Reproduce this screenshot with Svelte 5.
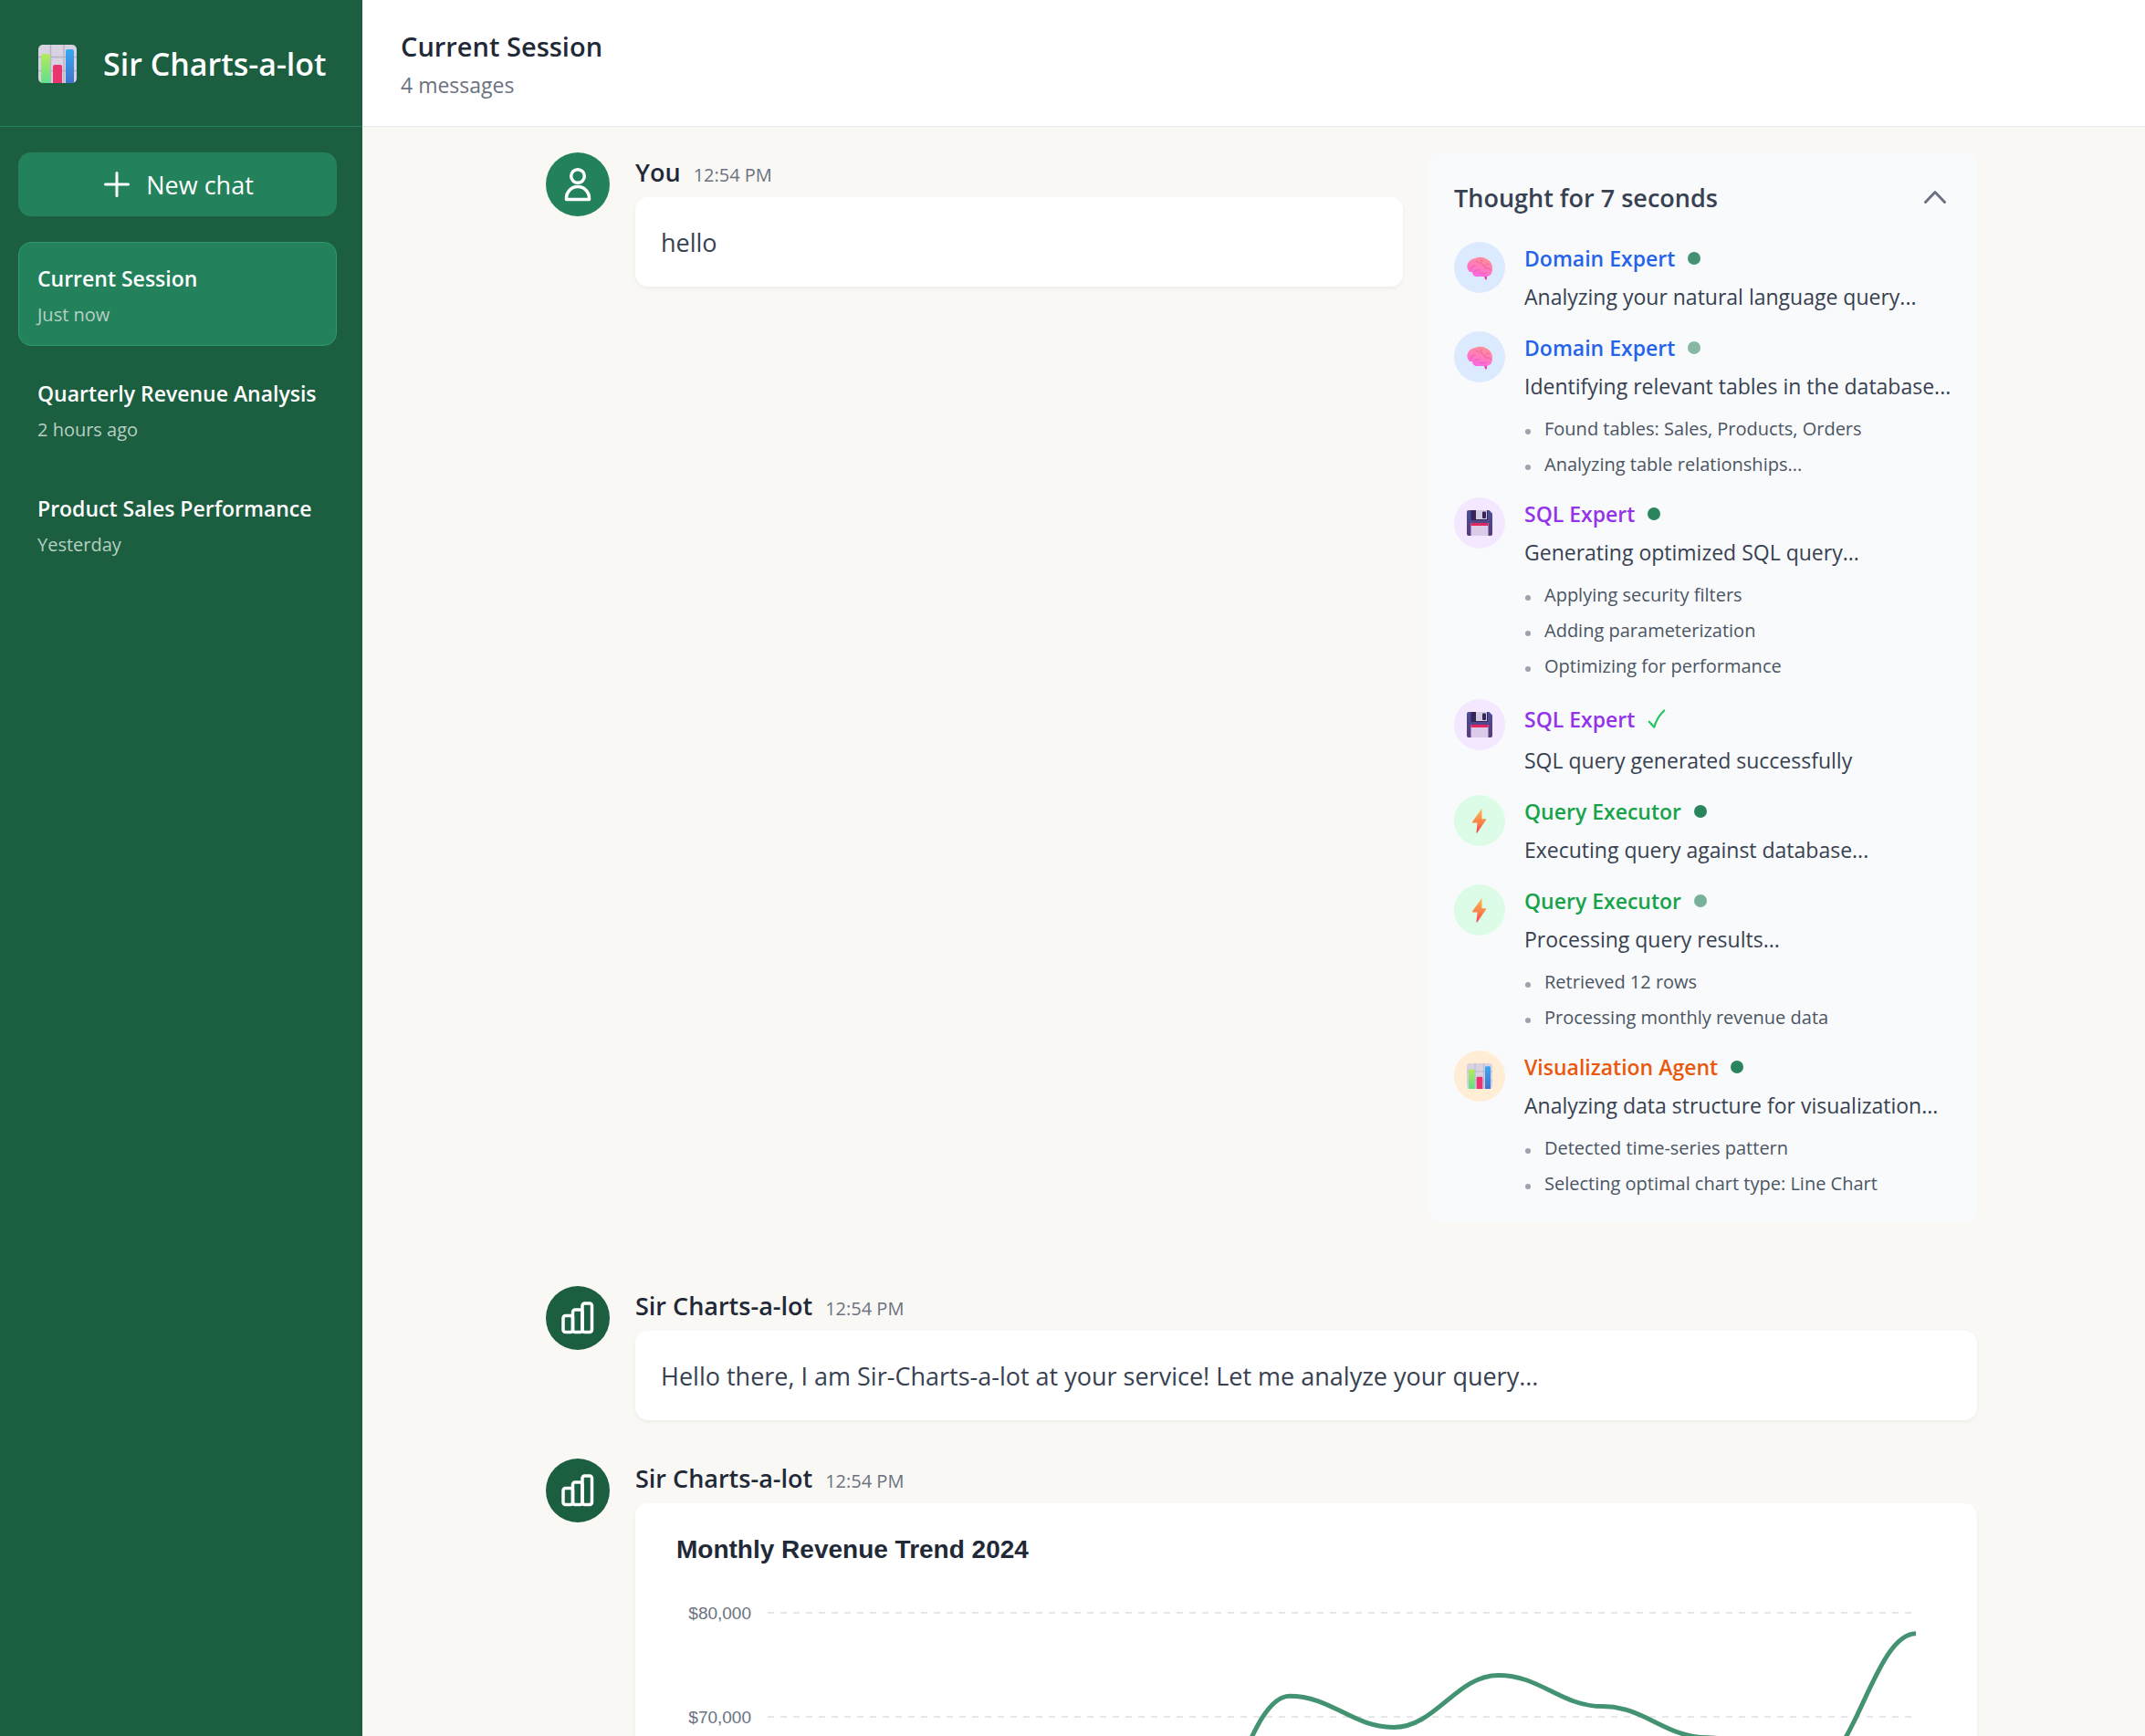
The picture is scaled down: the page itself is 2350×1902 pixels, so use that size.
<script>
  const sessions = [
    { title: 'Current Session', when: 'Just now', active: true },
    { title: 'Quarterly Revenue Analysis', when: '2 hours ago', active: false },
    { title: 'Product Sales Performance', when: 'Yesterday', active: false }
  ];

  const thoughts = [
    { agent: 'Domain Expert', kind: 'domain', status: 'mid', text: 'Analyzing your natural language query...', details: [] },
    { agent: 'Domain Expert', kind: 'domain', status: 'dim', text: 'Identifying relevant tables in the database...', details: ['Found tables: Sales, Products, Orders', 'Analyzing table relationships...'] },
    { agent: 'SQL Expert', kind: 'sql', status: 'full', text: 'Generating optimized SQL query...', details: ['Applying security filters', 'Adding parameterization', 'Optimizing for performance'] },
    { agent: 'SQL Expert', kind: 'sql', status: 'done', text: 'SQL query generated successfully', details: [] },
    { agent: 'Query Executor', kind: 'query', status: 'full', text: 'Executing query against database...', details: [] },
    { agent: 'Query Executor', kind: 'query', status: 'soft', text: 'Processing query results...', details: ['Retrieved 12 rows', 'Processing monthly revenue data'] },
    { agent: 'Visualization Agent', kind: 'viz', status: 'full', text: 'Analyzing data structure for visualization...', details: ['Detected time-series pattern', 'Selecting optimal chart type: Line Chart'] }
  ];

  // Chart geometry, in viewBox units
  const left = 117;
  const right = 1375;
  const top = 40;
  const perTen = 114;
  const revenue = [45, 52, 48, 61, 58, 72, 69, 74, 71, 68, 65, 78];
  const ticks = [80, 70];
  const yOf = (v) => top + ((80 - v) / 10) * perTen;
  const step = (right - left) / (revenue.length - 1);
  const line = revenue
    .map((v, i) => {
      const x = left + i * step;
      if (i === 0) return `M${x} ${yOf(v)}`;
      const h = step * 0.4;
      return `C${x - step + h} ${yOf(revenue[i - 1])} ${x - h} ${yOf(v)} ${x} ${yOf(v)}`;
    })
    .join(' ');

  let open = $state(true);
</script>

{#snippet chartEmoji()}
  <svg class="emoji" viewBox="0 0 42 42" aria-hidden="true">
    <defs>
      <linearGradient id="barGreen" x1="0" y1="0" x2="0" y2="1"><stop offset="0" stop-color="#b4ea5c" /><stop offset="1" stop-color="#5fe08c" /></linearGradient>
      <linearGradient id="barBlue" x1="0" y1="0" x2="0" y2="1"><stop offset="0" stop-color="#36a9f5" /><stop offset="1" stop-color="#4273cd" /></linearGradient>
    </defs>
    <rect width="42" height="42" rx="5" fill="#d9d2e3" />
    <path d="M13.5 0V42M28 0V42M0 13.5H42M0 28.500H42" stroke="#b9b1c6" stroke-width="1.4" />
    <path d="M3 42V12q0-2 2-2h6q2 0 2 2V42z" fill="url(#barGreen)" />
    <path d="M16 42V24q0-2 2-2h6q2 0 2 2V42z" fill="#e8346f" />
    <path d="M30 42V7q0-2 2-2h5q2 0 2 2V42z" fill="url(#barBlue)" />
  </svg>
{/snippet}

{#snippet brainEmoji()}
  <svg class="emoji" viewBox="0 0 28 28" aria-hidden="true">
    <defs>
      <linearGradient id="brain" x1="0.7" y1="0" x2="0.3" y2="1"><stop offset="0" stop-color="#ff8f93" /><stop offset="0.5" stop-color="#ff7cb9" /><stop offset="1" stop-color="#fb62ea" /></linearGradient>
    </defs>
    <path d="M18.500 22l1.500 5q1.500 1 2-.5L22 22z" fill="#e93fae" />
    <path d="M3 19Q-1 15 1 10 3 5 9 4q7-3 13 1 6 3 6 10 0 7-4 8-2 2-6 1H10Q6 23 6 19z" fill="url(#brain)" />
    <path d="M5 16q0-4 4-4M8 19q2-3 6-2M16 6q-2 3 1 5t4 4M24 10q-3 0-4 2M21 15q4-1 5 2M10 7q3 0 4 3M14 20q5 2 8-1" fill="none" stroke="#e4559f" stroke-width="0.8" stroke-linecap="round" />
  </svg>
{/snippet}

{#snippet floppyEmoji()}
  <svg class="emoji" viewBox="0 0 28 28" aria-hidden="true">
    <defs>
      <linearGradient id="disk" x1="0" y1="0" x2="0" y2="1"><stop offset="0" stop-color="#47519b" /><stop offset="1" stop-color="#5b3a78" /></linearGradient>
    </defs>
    <path d="M2 0H24.500L28 3.500V26q0 2-2 2H2q-2 0-2-2V2Q0 0 2 0z" fill="url(#disk)" />
    <path d="M4.500 0H23V9.500q0 1.500-1.500 1.500H6Q4.500 11 4.500 9.500z" fill="#35255a" />
    <path d="M10 0H22V9.500q0 .5-1 .5H10z" fill="#d3cce0" />
    <rect x="17" y="1.500" width="4" height="7.500" rx="1" fill="#35255a" />
    <path d="M4.500 14H23.500V28H4.500z" fill="#dacbe9" />
    <path d="M4.500 14H23.500V17H4.500z" fill="#e3265f" />
  </svg>
{/snippet}

{#snippet boltEmoji()}
  <svg class="emoji" viewBox="0 0 28 28" aria-hidden="true">
    <defs>
      <linearGradient id="bolt" x1="0" y1="0" x2="0" y2="1"><stop offset="0" stop-color="#fdb94c" /><stop offset="0.600" stop-color="#fb7f4a" /><stop offset="1" stop-color="#ea3f5c" /></linearGradient>
    </defs>
    <path d="M16 1.500L6 15.500q-.6 1 .5 1H11.500L10.500 27q0 1.500 1 .3L21 13.500q.6-1.200-.6-1.200H16.500V2q0-1-.5-.5z" fill="url(#bolt)" />
  </svg>
{/snippet}

{#snippet barsAvatar()}
  <div class="avatar bot">
    <svg viewBox="0 0 42 42" aria-hidden="true">
      <rect x="5" y="18.500" width="10.500" height="18" rx="2.500" />
      <rect x="15.500" y="12" width="10.500" height="24.500" rx="2.500" />
      <rect x="26" y="5" width="10.500" height="31.500" rx="2.500" />
    </svg>
  </div>
{/snippet}

<div class="app">
  <aside class="sidebar">
    <div class="brand">
      <span class="logo">{@render chartEmoji()}</span>
      <h1>Sir Charts-a-lot</h1>
    </div>
    <div class="side-body">
      <button class="new-chat" type="button">
        <svg viewBox="0 0 28 28" aria-hidden="true"><path d="M14 1.500V26.500M1.500 14H26.500" /></svg>
        New chat
      </button>
      <nav class="sessions">
        {#each sessions as s}
          <button type="button" class="session" class:active={s.active}>
            <span class="session-title">{s.title}</span>
            <span class="session-when">{s.when}</span>
          </button>
        {/each}
      </nav>
    </div>
  </aside>

  <div class="page">
    <header class="topbar">
      <h2>Current Session</h2>
      <p>4 messages</p>
    </header>

    <main class="scroller">
      <div class="thread">
        <article class="message first">
          <div class="avatar user">
            <svg viewBox="0 0 42 42" aria-hidden="true">
              <circle cx="21" cy="12" r="7.300" />
              <path d="M8.500 37.500V36a12.500 12.500 0 0 1 25 0v1.500z" />
            </svg>
          </div>
          <div class="content">
            <div class="meta"><strong>You</strong><time>12:54 PM</time></div>
            <div class="bubble">hello</div>
          </div>
          <section class="thoughts">
            <button class="toggle" type="button" aria-expanded={open} onclick={() => (open = !open)}>
              Thought for 7 seconds
              <svg viewBox="0 0 24 24" aria-hidden="true"><path d="M1.500 17.500L12 6.500l10.500 11" /></svg>
            </button>
            {#if open}
              <ul class="steps">
                {#each thoughts as t}
                  <li class="step {t.kind}">
                    <span class="badge">
                      {#if t.kind === 'domain'}{@render brainEmoji()}
                      {:else if t.kind === 'sql'}{@render floppyEmoji()}
                      {:else if t.kind === 'query'}{@render boltEmoji()}
                      {:else}{@render chartEmoji()}{/if}
                    </span>
                    <div class="step-body">
                      <div class="agent" class:tall={t.status === 'done'}>
                        <span>{t.agent}</span>
                        {#if t.status === 'done'}
                          <svg class="check" viewBox="0 0 22 24" aria-label="done"><path d="M2 15l6 6.500Q11 10 20 1.500" /></svg>
                        {:else}
                          <i class="dot {t.status}"></i>
                        {/if}
                      </div>
                      <p>{t.text}</p>
                      {#if t.details.length}
                        <ul class="details">
                          {#each t.details as d}<li>{d}</li>{/each}
                        </ul>
                      {/if}
                    </div>
                  </li>
                {/each}
              </ul>
            {/if}
          </section>
        </article>

        <article class="message">
          {@render barsAvatar()}
          <div class="content">
            <div class="meta"><strong>Sir Charts-a-lot</strong><time>12:54 PM</time></div>
            <div class="bubble">Hello there, I am Sir-Charts-a-lot at your service! Let me analyze your query...</div>
          </div>
        </article>

        <article class="message">
          {@render barsAvatar()}
          <div class="content">
            <div class="meta"><strong>Sir Charts-a-lot</strong><time>12:54 PM</time></div>
            <div class="bubble chart">
              <h3>Monthly Revenue Trend 2024</h3>
              <svg class="plot" viewBox="0 0 1414 520" role="img" aria-label="Monthly revenue line chart">
                {#each ticks as t}
                  <text x="99" y={yOf(t) + 7} text-anchor="end">${t},000</text>
                  <path class="grid" d="M{left} {yOf(t)}H{right - 5}" />
                {/each}
                <path class="line" d={line} />
              </svg>
            </div>
          </div>
        </article>
      </div>
    </main>
  </div>
</div>

<style>
  :global(body) { margin: 0; }
  * { box-sizing: border-box; }
  h1, h2, h3, p, ul { margin: 0; padding: 0; }
  ul { list-style: none; }
  button { font: inherit; color: inherit; border: 0; background: none; cursor: pointer; text-align: left; }
  svg { display: block; flex: none; }

  .app {
    display: flex;
    height: 100vh;
    overflow: hidden;
    font-family: 'Segoe UI', 'Open Sans', 'Noto Sans', sans-serif;
    font-size: 27px;
    color: #374151;
    background: #faf8f5;
  }

  .sidebar { flex: none; width: 397px; background: #1b5e40; color: #fff; }
  .brand { display: flex; align-items: center; gap: 29px; height: 139px; padding: 2px 0 0 42px; border-bottom: 1px solid #23825c; }
  .logo .emoji { width: 42px; height: 42px; }
  h1 { font-size: 34px; font-weight: 600; white-space: nowrap; }
  .side-body { padding: 28px 28px 28px 20px; }
  .new-chat { display: flex; align-items: center; justify-content: center; gap: 18px; width: 100%; height: 70px; padding: 0 0 0 3px; border-radius: 14px; background: #23825c; }
  .new-chat svg { width: 28px; height: 28px; fill: none; stroke: #fff; stroke-width: 3; stroke-linecap: round; }
  .sessions { display: flex; flex-direction: column; gap: 12px; margin-top: 28px; }
  .session { display: flex; flex-direction: column; gap: 8px; padding: 21px 20px 19px; border: 1px solid transparent; border-radius: 14px; }
  .session.active { background: #23825c; border-color: #2d9a6b; }
  .session-title { font-size: 23px; line-height: 36px; font-weight: 600; white-space: nowrap; }
  .session-when { font-size: 20px; line-height: 28px; color: #b7d0c4; }

  .page { flex: 1; min-width: 0; display: flex; flex-direction: column; }
  .topbar { flex: none; height: 139px; padding: 30px 42px 0; background: #fff; border-bottom: 1px solid #e5e7eb; }
  h2 { font-size: 29px; line-height: 42px; font-weight: 600; color: #1f2937; }
  .topbar p { font-size: 23px; line-height: 42px; color: #6b7280; }

  .scroller { flex: 1; min-height: 0; overflow-y: auto; scrollbar-width: none; padding: 28px 42px 42px 59px; }
  .thread { max-width: 1568px; margin: 0 auto; display: flex; flex-direction: column; gap: 42px; }
  .message { display: flex; align-items: flex-start; gap: 28px; }
  .message.first { padding-bottom: 28px; }
  .avatar { flex: none; display: grid; place-items: center; width: 70px; height: 70px; border-radius: 50%; }
  .avatar.user { background: #23825c; }
  .avatar.bot { background: #1b5e40; }
  .avatar svg { width: 42px; height: 42px; fill: none; stroke: #fff; stroke-width: 3.5; stroke-linejoin: round; }
  .content { flex: 1; min-width: 0; }
  .meta { display: flex; align-items: baseline; gap: 14px; height: 49px; line-height: 44px; }
  .meta strong { font-size: 27px; font-weight: 600; color: #1f2937; }
  .meta time { font-size: 20px; color: #6b7280; }
  .bubble { padding: 29px 28px 27px; border-radius: 14px; background: #fff; line-height: 42px; box-shadow: 0 2px 4px rgba(0, 0, 0, 0.05); }

  .thoughts { flex: none; width: 601px; padding: 28px 28px 26px; border-radius: 14px; background: #f9fafb; }
  .toggle { display: flex; align-items: center; justify-content: space-between; width: 100%; height: 42px; padding: 0 6px 0 0; font-weight: 600; }
  .toggle svg { width: 24px; height: 24px; fill: none; stroke: #6b7280; stroke-width: 3; stroke-linecap: round; stroke-linejoin: round; }
  .steps { display: flex; flex-direction: column; gap: 20px; margin-top: 28px; }
  .step { display: flex; gap: 21px; }
  .badge { flex: none; display: grid; place-items: center; width: 56px; height: 56px; border-radius: 50%; }
  .badge .emoji { width: 28px; height: 28px; }
  .step-body { min-width: 0; white-space: nowrap; font-size: 23px; line-height: 36px; }
  .agent { display: flex; align-items: center; gap: 14px; height: 36px; margin-bottom: 6px; font-weight: 600; }
  .agent.tall { height: 43px; }
  .domain .badge { background: #dbeafe; }
  .domain .agent { color: #2563eb; }
  .sql .badge { background: #f3e8ff; }
  .sql .agent { color: #9333ea; }
  .query .badge { background: #dcfce7; }
  .query .agent { color: #16a34a; }
  .viz .badge { background: #ffedd5; }
  .viz .agent { color: #ea580c; }
  .dot { width: 14px; height: 14px; border-radius: 50%; background: #2a855f; }
  .dot.mid { background: #439372; }
  .dot.dim { background: #86b9a4; }
  .dot.soft { background: #78b19a; }
  .check { width: 20px; height: 24px; fill: none; stroke: #22c55e; stroke-width: 2.4; stroke-linecap: round; stroke-linejoin: round; }
  .details { display: flex; flex-direction: column; gap: 7px; margin-top: 13px; font-size: 20px; line-height: 32px; color: #4b5563; }
  .details li { display: flex; align-items: center; gap: 15px; }
  .details li::before { content: ''; width: 6px; height: 6px; margin: 6px 0 0 1px; border-radius: 50%; background: #9ca3af; }

  .chart { font-family: 'Liberation Sans', Arial, sans-serif; }
  h3 { padding-left: 17px; font-size: 28px; line-height: 44px; font-weight: 700; color: #1f2937; }
  .plot { width: 100%; height: auto; margin-top: 7px; }
  .plot text { font-size: 19px; fill: #6b7280; }
  .grid { fill: none; stroke: #e5e7eb; stroke-width: 2; stroke-dasharray: 7 7; }
  .line { fill: none; stroke: #439372; stroke-width: 5; }
</style>
